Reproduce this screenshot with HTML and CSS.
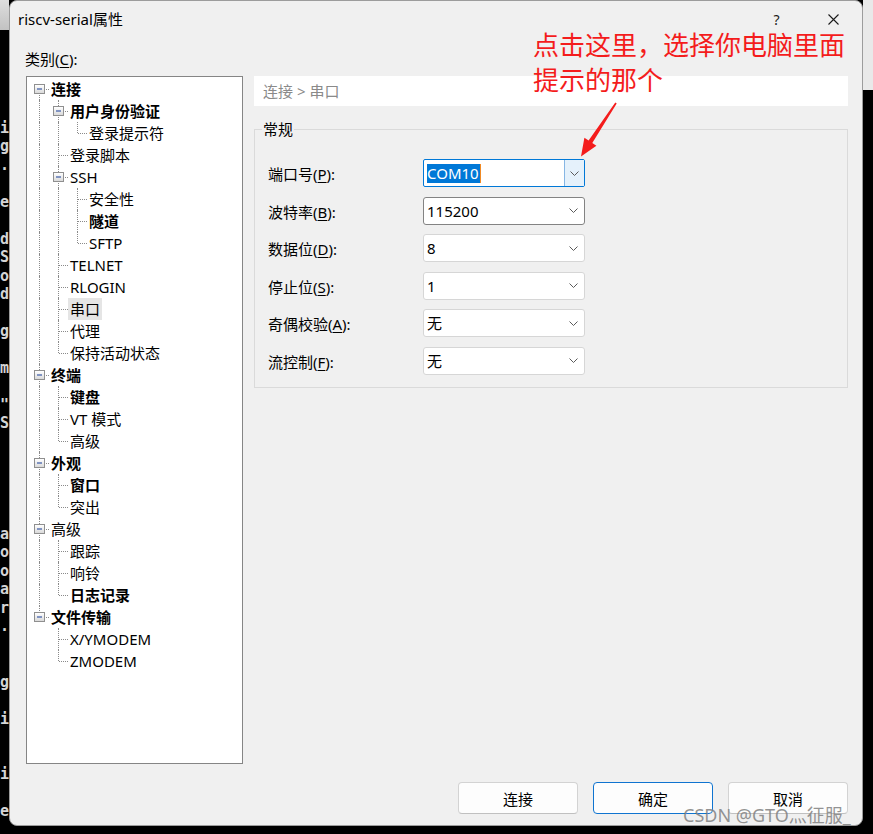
FILE: index.html
```html
<!DOCTYPE html>
<html lang="zh-CN">
<head>
<meta charset="utf-8">
<title>riscv-serial属性</title>
<link rel="stylesheet" href="styles.css">
</head>
<body>
<div class="screen">
  <div class="term-left">
    <div class="cap"></div>
<pre class="term-text">i
g
.

e

d
S
o
d

g

m

"
S





a
o
o
a
r
.


g

i


i

e</pre>
  </div>

  <div class="dialog">
    <div class="titlebar">
      <span class="title">riscv-serial属性</span>
      <span class="cap-btn help">?</span>
      <span class="cap-btn close"><svg width="11" height="11" viewBox="0 0 11 11"><path d="M0.5 0.5 L10.5 10.5 M10.5 0.5 L0.5 10.5" stroke="#1a1a1a" stroke-width="1.1" fill="none"/></svg></span>
    </div>

    <div class="main">
      <div class="cat-label">类别(<u>C</u>):</div>

      <div class="tree">
        <div class="row b"><span class="cell f"><i class="exp"></i></span><span class="t">连接</span></div>
        <div class="row b"><span class="cell v"></span><span class="cell j"><i class="exp"></i></span><span class="t">用户身份验证</span></div>
        <div class="row"><span class="cell v"></span><span class="cell v"></span><span class="cell l"></span><span class="t">登录提示符</span></div>
        <div class="row"><span class="cell v"></span><span class="cell j"></span><span class="t">登录脚本</span></div>
        <div class="row"><span class="cell v"></span><span class="cell j"><i class="exp"></i></span><span class="t">SSH</span></div>
        <div class="row"><span class="cell v"></span><span class="cell v"></span><span class="cell j"></span><span class="t">安全性</span></div>
        <div class="row b"><span class="cell v"></span><span class="cell v"></span><span class="cell j"></span><span class="t">隧道</span></div>
        <div class="row"><span class="cell v"></span><span class="cell v"></span><span class="cell l"></span><span class="t">SFTP</span></div>
        <div class="row"><span class="cell v"></span><span class="cell j"></span><span class="t">TELNET</span></div>
        <div class="row"><span class="cell v"></span><span class="cell j"></span><span class="t">RLOGIN</span></div>
        <div class="row sel"><span class="cell v"></span><span class="cell j"></span><span class="t">串口</span></div>
        <div class="row"><span class="cell v"></span><span class="cell j"></span><span class="t">代理</span></div>
        <div class="row"><span class="cell v"></span><span class="cell l"></span><span class="t">保持活动状态</span></div>
        <div class="row b"><span class="cell j"><i class="exp"></i></span><span class="t">终端</span></div>
        <div class="row b"><span class="cell v"></span><span class="cell j"></span><span class="t">键盘</span></div>
        <div class="row"><span class="cell v"></span><span class="cell j"></span><span class="t">VT 模式</span></div>
        <div class="row"><span class="cell v"></span><span class="cell l"></span><span class="t">高级</span></div>
        <div class="row b"><span class="cell j"><i class="exp"></i></span><span class="t">外观</span></div>
        <div class="row b"><span class="cell v"></span><span class="cell j"></span><span class="t">窗口</span></div>
        <div class="row"><span class="cell v"></span><span class="cell l"></span><span class="t">突出</span></div>
        <div class="row"><span class="cell j"><i class="exp"></i></span><span class="t">高级</span></div>
        <div class="row"><span class="cell v"></span><span class="cell j"></span><span class="t">跟踪</span></div>
        <div class="row"><span class="cell v"></span><span class="cell j"></span><span class="t">响铃</span></div>
        <div class="row b"><span class="cell v"></span><span class="cell l"></span><span class="t">日志记录</span></div>
        <div class="row b"><span class="cell l"><i class="exp"></i></span><span class="t">文件传输</span></div>
        <div class="row"><span class="cell"></span><span class="cell j"></span><span class="t">X/YMODEM</span></div>
        <div class="row"><span class="cell"></span><span class="cell l"></span><span class="t">ZMODEM</span></div>
      </div>

      <div class="panel">
        <div class="crumb">连接 &gt; 串口</div>
        <fieldset class="group">
          <legend>常规</legend>
          <div class="form">
            <label>端口号(<u>P</u>):</label>
            <div class="combo active">
              <span class="val"><span class="hl">COM10</span></span>
              <span class="dd"><svg class="chev" width="9" height="5" viewBox="0 0 9 5"><path d="M0.5 0.5 L4.5 4.5 L8.5 0.5" fill="none" stroke="#5a5a5a" stroke-width="1"/></svg></span>
            </div>

            <label>波特率(<u>B</u>):</label>
            <div class="combo hover">
              <span class="val">115200</span>
              <span class="dd"><svg class="chev" width="9" height="5" viewBox="0 0 9 5"><path d="M0.5 0.5 L4.5 4.5 L8.5 0.5" fill="none" stroke="#5a5a5a" stroke-width="1"/></svg></span>
            </div>

            <label>数据位(<u>D</u>):</label>
            <div class="combo">
              <span class="val">8</span>
              <span class="dd"><svg class="chev" width="9" height="5" viewBox="0 0 9 5"><path d="M0.5 0.5 L4.5 4.5 L8.5 0.5" fill="none" stroke="#5a5a5a" stroke-width="1"/></svg></span>
            </div>

            <label>停止位(<u>S</u>):</label>
            <div class="combo">
              <span class="val">1</span>
              <span class="dd"><svg class="chev" width="9" height="5" viewBox="0 0 9 5"><path d="M0.5 0.5 L4.5 4.5 L8.5 0.5" fill="none" stroke="#5a5a5a" stroke-width="1"/></svg></span>
            </div>

            <label>奇偶校验(<u>A</u>):</label>
            <div class="combo">
              <span class="val">无</span>
              <span class="dd"><svg class="chev" width="9" height="5" viewBox="0 0 9 5"><path d="M0.5 0.5 L4.5 4.5 L8.5 0.5" fill="none" stroke="#5a5a5a" stroke-width="1"/></svg></span>
            </div>

            <label>流控制(<u>F</u>):</label>
            <div class="combo">
              <span class="val">无</span>
              <span class="dd"><svg class="chev" width="9" height="5" viewBox="0 0 9 5"><path d="M0.5 0.5 L4.5 4.5 L8.5 0.5" fill="none" stroke="#5a5a5a" stroke-width="1"/></svg></span>
            </div>
          </div>
        </fieldset>
      </div>
    </div>

    <div class="footer">
      <button class="btn">连接</button>
      <button class="btn primary">确定</button>
      <button class="btn">取消</button>
    </div>
  </div>

  <div class="term-right"><div class="cap"></div></div>

  <div class="annotation">点击这里，选择你电脑里面<br>提示的那个</div>
  <svg class="arrow" width="873" height="200" viewBox="0 0 873 200">
    <polygon points="616.7,103.5 592.3,142.9 596.4,145.8 581,156.5 584.4,137.8 588.6,140.6 615.3,102.6" fill="#f41c1c"/>
  </svg>
  <div class="watermark">CSDN @GTO灬征服_</div>
</div>
</body>
</html>
```

FILE: styles.css
```css
* { box-sizing: border-box; }

html, body {
  margin: 0;
  padding: 0;
}

body {
  width: 873px;
  height: 834px;
  overflow: hidden;
  background: #000;
  font-family: "Noto Sans", "Noto Sans CJK SC", sans-serif;
  font-size: 15px;
  color: #000;
}

.screen {
  position: relative;
  display: flex;
  width: 873px;
  height: 834px;
  background: #000;
}

/* terminal behind the dialog */
.term-left {
  width: 9px;
  flex: none;
  display: flex;
  flex-direction: column;
  overflow: hidden;
}

.term-left .cap {
  height: 30px;
  flex: none;
  background: linear-gradient(#dedede, #c2c2c2);
}

.term-text {
  margin: 0;
  padding-top: 89px;
  font: bold 15px/18.45px "DejaVu Sans Mono", monospace;
  color: #d4d4d4;
}

.term-right {
  width: 10px;
  flex: none;
}

.term-right .cap {
  height: 90px;
  background: #e9e9e9;
}

/* dialog */
.dialog {
  width: 854px;
  height: 826px;
  flex: none;
  background: #f0f0f0;
  border: 1px solid #9c9c9c;
  border-radius: 8px;
  display: flex;
  flex-direction: column;
  overflow: hidden;
}

.titlebar {
  height: 36px;
  flex: none;
  display: flex;
  align-items: center;
  padding-left: 8px;
}

.title {
  font-size: 15px;
  line-height: 20px;
  margin-right: auto;
}

.cap-btn {
  width: 57px;
  height: 36px;
  display: flex;
  align-items: center;
  justify-content: center;
}

.help {
  font-size: 14px;
  color: #1a1a1a;
}

.main {
  flex: none;
  display: grid;
  grid-template-columns: 217px 594px;
  grid-template-rows: 27px 688px;
  column-gap: 11px;
  padding: 12px 14px 0 16px;
}

.cat-label {
  grid-column: 1;
  grid-row: 1;
  line-height: 20px;
  margin-left: -1px;
}

u {
  text-decoration-thickness: 1px;
  text-underline-offset: 2px;
}

/* tree */
.tree {
  grid-column: 1;
  grid-row: 2;
  background: #fff;
  border: 1px solid #858585;
  padding: 1px 0 0 3px;
  overflow: hidden;
}

.row {
  display: flex;
  height: 22px;
}

.cell {
  width: 19px;
  flex: none;
  position: relative;
}

.cell.v::before,
.cell.j::before,
.cell.l::before,
.cell.f::before {
  content: "";
  position: absolute;
  left: 9px;
  top: 0;
  bottom: 0;
  border-left: 1px dotted #8a8a8a;
}

.cell.l::before { bottom: 11px; }
.cell.f::before { top: 11px; }

.cell.j::after,
.cell.l::after,
.cell.f::after {
  content: "";
  position: absolute;
  left: 10px;
  width: 9px;
  top: 11px;
  border-top: 1px dotted #8a8a8a;
}

.exp {
  position: absolute;
  z-index: 1;
  left: 4px;
  top: 6px;
  width: 11px;
  height: 10px;
  border: 1px solid #8f8f8f;
  background: linear-gradient(#ffffff, #dadada);
}

.exp::after {
  content: "";
  position: absolute;
  left: 2px;
  right: 2px;
  top: 3px;
  height: 2px;
  background: #3a5aa6;
  transform: scaleY(0.6);
}

.t {
  padding: 0 2px;
  line-height: 22px;
  white-space: nowrap;
}

.row.b .t { font-weight: 700; }
.row.sel .t { background: #e5e5e5; }

/* right panel */
.panel {
  grid-column: 2;
  grid-row: 2;
  display: flex;
  flex-direction: column;
}

.crumb {
  height: 30px;
  flex: none;
  background: #fff;
  color: #8a8a8a;
  line-height: 30px;
  padding-left: 9px;
}

.group {
  margin: 13px 0 0;
  padding: 20px 0 12px 0;
  border: 1px solid #dadada;
  min-width: 0;
}

.group legend {
  margin-left: 7px;
  padding: 0 1px;
  line-height: 20px;
}

.form {
  display: grid;
  grid-template-columns: 155px 162px;
  grid-auto-rows: 28px;
  row-gap: 9.6px;
  align-items: center;
  padding-left: 13px;
}

.form label {
  line-height: 20px;
  padding-top: 2px;
}

.combo {
  height: 28px;
  display: flex;
  align-items: center;
  border: 1px solid #d6d6d6;
  border-radius: 3px;
  background: #fff;
  padding-left: 3px;
}

.combo.hover { border-color: #838383; }

.combo.active {
  border-color: #0078d7;
  border-radius: 2px;
}

.val {
  flex: 1;
  line-height: 20px;
}

.hl {
  display: inline-block;
  background: #0078d7;
  color: #fff;
  line-height: 19px;
  padding: 0 1px 0 0;
  position: relative;
}

.hl::after {
  content: "";
  position: absolute;
  right: -1px;
  top: 0;
  width: 1px;
  height: 19px;
  background: #f08a24;
}

.dd {
  width: 20px;
  align-self: stretch;
  display: flex;
  align-items: center;
  justify-content: center;
  margin-right: 1px;
}

.combo.active .dd {
  margin-right: 0;
  background: #e5f1fb;
  border-left: 1px solid #86b6e4;
}

.chev { display: block; }

/* footer */
.footer {
  flex: none;
  display: flex;
  justify-content: flex-end;
  gap: 15px;
  padding: 18px 14px 0 0;
}

.btn {
  width: 120px;
  height: 32px;
  font-family: "Noto Sans", "Noto Sans CJK SC", sans-serif;
  font-size: 15px;
  color: #000;
  background: #fdfdfd;
  border: 1px solid #d3d3d3;
  border-bottom-color: #c0c0c0;
  border-radius: 4px;
  padding: 0;
}

.btn.primary {
  border-color: #0f74d0;
}

/* overlays */
.annotation {
  position: absolute;
  left: 533px;
  top: 26px;
  font-family: "Noto Sans CJK SC", sans-serif;
  font-size: 26px;
  line-height: 35px;
  color: #f41c1c;
  white-space: nowrap;
}

.arrow {
  position: absolute;
  left: 0;
  top: 0;
}

.watermark {
  position: absolute;
  left: 683px;
  top: 804px;
  font-family: "Noto Sans", "Noto Sans CJK SC", sans-serif;
  font-size: 18px;
  line-height: 22px;
  color: rgba(128, 128, 128, 0.85);
  white-space: nowrap;
}
```
